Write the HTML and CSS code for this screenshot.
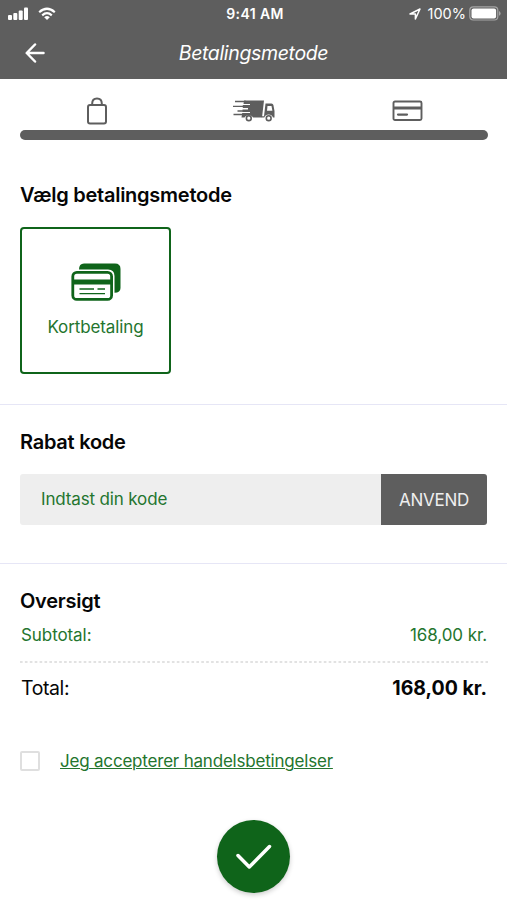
FILE: index.html
```html
<!DOCTYPE html>
<html lang="da">
<head>
<meta charset="utf-8">
<meta name="viewport" content="width=device-width, initial-scale=1">
<title>Betalingsmetode</title>
<link rel="stylesheet" href="styles.css">
</head>
<body>
<header class="header">
  <div class="status">
    <div class="status-left">
      <svg width="21" height="14" viewBox="0 0 21 14" fill="#fff"><rect x="0" y="8" width="4" height="5" rx="1"/><rect x="5.3" y="6" width="4" height="7" rx="1"/><rect x="10.7" y="3.5" width="4" height="9.5" rx="1"/><rect x="16" y="0.5" width="4" height="12.5" rx="1"/></svg>
      <svg width="18" height="14" viewBox="0 0 18 14" fill="none" stroke="#fff" stroke-width="2.2"><path d="M1.2 5.2Q9-1.7 16.8 5.2"/><path d="M4.2 8.3Q9 4.1 13.8 8.3"/><path d="M9 13L6.2 10.2Q9 7.9 11.8 10.2Z" fill="#fff" stroke="none"/></svg>
    </div>
    <span class="time">9:41 AM</span>
    <div class="status-right">
      <svg class="location" width="12" height="12" viewBox="0 0 12 12" fill="none" stroke="#fff" stroke-width="1.5" stroke-linejoin="round"><path d="M1 6L11 1L6.4 11V6Z"/></svg>
      <span class="percent">100%</span>
      <svg width="32" height="15" viewBox="0 0 32 15"><rect x=".8" y=".8" width="28" height="13.2" rx="3.5" fill="none" stroke="#a5a5a5" stroke-width="1.2"/><rect x="2.5" y="2.4" width="24.6" height="10" rx="2" fill="#fff"/><path d="M30 5Q31.6 5.6 31.6 7.4T30 9.8Z" fill="#a5a5a5"/></svg>
    </div>
  </div>
  <div class="nav">
    <svg class="back" width="20" height="20" viewBox="0 0 20 20" fill="none" stroke="#fff" stroke-width="2.5" stroke-linecap="round" stroke-linejoin="round"><path d="M10 1.5L1.7 10L10 18.5M2 10H18.5"/></svg>
    <h1 class="title">Betalingsmetode</h1>
  </div>
</header>
<div class="steps">
  <div class="step-icons">
    <svg width="22" height="28" viewBox="0 0 22 28" fill="none" stroke="#5e5e5e" stroke-width="2"><rect x="2" y="8" width="18" height="18.5" rx="2"/><path d="M6.2 8V6.5Q6.2 1.5 11 1.5T15.8 6.5V8"/></svg>
    <svg class="truck" width="43" height="24" viewBox="0 0 43 24"><path d="M11 1.5H31L29 18.5H20A5 5 0 0 0 11.5 18.5H8.5L9.2 14H17V13H9.5V10.5H15V9H9.8V6H17V5H10.5Z" fill="#5e5e5e"/><path d="M2 2.5H13M0 7.3H13M4.5 12H14M.5 15.5H11" stroke="#5e5e5e" stroke-width="1.3"/><path d="M32.5 4.5H38.5Q40 4.5 40.4 6L41.5 12V18.5H40A4.6 4.6 0 0 0 31.3 18.5H28.8V17.3H31Z" fill="#5e5e5e"/><path d="M34.5 7H38.5L39.4 11.7H34Z" fill="#fff"/><g fill="#fff" stroke="#5e5e5e" stroke-width="1.6"><circle cx="15.8" cy="19.2" r="2.4"/><circle cx="35.7" cy="19.2" r="2.4"/></g></svg>
    <svg width="31" height="22" viewBox="0 0 31 22" fill="none" stroke="#5e5e5e"><rect x="1.5" y="1.5" width="28" height="18.5" rx="1.5" stroke-width="1.9"/><path d="M1.5 8H29.5" stroke-width="3"/><path d="M6 14.6H15" stroke-width="2.2" stroke-linecap="round"/></svg>
  </div>
  <div class="progress"></div>
</div>
<main>
  <section class="method">
    <h2>Vælg betalingsmetode</h2>
    <div class="card">
      <svg width="50" height="38" viewBox="0 0 50 38"><path d="M8 6.5Q8 .5 13 .5H44Q49.5 .5 49.5 6V25Q49.5 29.5 43.5 29.8V13Q43.5 6.5 37 6.5Z" fill="#0f641a"/><rect x="1.8" y="9.4" width="38.8" height="27" rx="4" fill="#fff" stroke="#0f641a" stroke-width="2.8"/><path d="M1.5 19H41" stroke="#0f641a" stroke-width="5"/><path d="M8.5 26H23M26.5 26H34M8.5 30.6H34" stroke="#0f641a" stroke-width="1.3"/></svg>
      <span>Kortbetaling</span>
    </div>
  </section>
  <section class="discount">
    <h2>Rabat kode</h2>
    <div class="code">
      <div class="field">Indtast din kode</div>
      <button class="apply"><span>ANVEND</span></button>
    </div>
  </section>
  <section class="overview">
    <h2>Oversigt</h2>
    <div class="row subtotal"><span>Subtotal:</span><span>168,00 kr.</span></div>
    <svg class="dots" width="468" height="2" viewBox="0 0 468 2"><path d="M0 1H468" stroke="#e2e2e2" stroke-width="2" stroke-dasharray="2.6 2.3"/></svg>
    <div class="row total"><span>Total:</span><strong>168,00 kr.</strong></div>
    <div class="terms"><span class="checkbox"></span><a>Jeg accepterer handelsbetingelser</a></div>
  </section>
  <button class="confirm" aria-label="OK">
    <svg width="36" height="26" viewBox="0 0 36 26" fill="none" stroke="#fff" stroke-width="3.5" stroke-linecap="round" stroke-linejoin="round"><path d="M2 11.5L13.3 23L33.5 2.5"/></svg>
  </button>
</main>
</body>
</html>
```
FILE: styles.css
```css
* { box-sizing: border-box; }
body { margin: 0; background: #fff; color: #060606; font-family: Inter, sans-serif; height: 900px; overflow: hidden; }
h1, h2 { margin: 0; }
svg { display: block; flex: none; }
button { border: 0; padding: 0; font-family: inherit; }
.header { height: 79px; background: #5e5e5e; color: #fff; }
.status { height: 27px; display: grid; grid-template-columns: 1fr auto 1fr; align-items: center; padding: 0 6px 0 8px; }
.status-left { display: flex; gap: 9px; }
.time { font-size: 14px; font-weight: 600; line-height: 18px; letter-spacing: .4px; margin-left: 1px; }
.status-right { display: flex; align-items: center; justify-content: flex-end; }
.location { margin-right: 7px; }
.percent { font-size: 14.5px; margin-right: 3px; }
.nav { height: 52px; display: grid; grid-template-columns: 1fr auto 1fr; align-items: center; padding: 0 25px; }
.title { font-size: 19.5px; font-weight: 400; font-style: italic; line-height: 24px; letter-spacing: -.35px; }
.steps { height: 98px; padding: 17px 19px 0 20px; }
.step-icons { height: 30px; display: flex; align-items: center; justify-content: space-between; padding: 0 65px 0 66px; }
.truck { margin-left: 8px; }
.progress { height: 10px; margin-top: 4px; border-radius: 5px; background: #5e5e5e; }
h2 { font-size: 20px; font-weight: 600; line-height: 28px; letter-spacing: -.25px; }
section { padding: 0 20px; }
.method { height: 228px; padding-top: 4px; border-bottom: 1px solid #e6e6f6; }
.card { width: 151px; height: 147px; margin-top: 18px; border: 2px solid #0f641a; border-radius: 4px; display: flex; flex-direction: column; align-items: center; padding-top: 34px; color: #24752e; font-size: 17px; line-height: 22px; letter-spacing: -.1px; }
.card span { margin-top: 15px; }
.discount { height: 159px; padding-top: 23px; border-bottom: 1px solid #e6e6f6; }
.code { height: 51px; margin-top: 18px; display: flex; border-radius: 3px; overflow: hidden; }
.field { flex: 1; background: #eee; padding-left: 21px; line-height: 51px; font-size: 17px; letter-spacing: -.15px; color: #24752e; }
.apply { width: 106px; background: #5e5e5e; color: #eee; font-size: 17px; letter-spacing: -.3px; }
.overview { height: 256px; padding-top: 23px; }
.row { display: flex; justify-content: space-between; }
.subtotal { height: 38px; margin-top: 8px; padding-left: 1px; font-size: 17px; line-height: 24px; letter-spacing: -.08px; color: #24752e; }
.total { font-size: 19.5px; line-height: 28px; margin-top: 11px; padding-left: 1px; letter-spacing: -.4px; }
.total strong { font-weight: 700; letter-spacing: 0; }
.terms { display: flex; align-items: center; height: 24px; margin-top: 47px; }
.checkbox { width: 20px; height: 20px; border: 2px solid #dfdfdf; border-radius: 2px; margin-right: 20px; }
.terms a { color: #24752e; font-size: 17px; letter-spacing: -.2px; text-decoration: underline; text-decoration-thickness: 1.4px; }
.confirm { width: 73px; height: 73px; margin: 0 auto; border-radius: 50%; background: #0f641a; display: flex; align-items: center; justify-content: center; box-shadow: 0 2px 5px #0003; }
```
